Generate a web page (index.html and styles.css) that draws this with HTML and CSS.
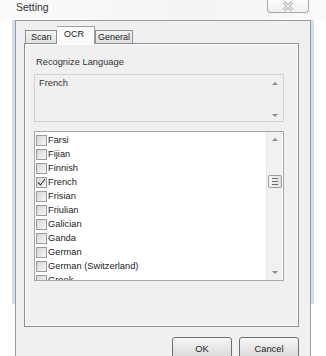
FILE: index.html
```html
<!DOCTYPE html>
<html lang="en">
<head>
    <meta charset="UTF-8">
    <title>Setting</title>
    <link rel="stylesheet" href="styles.css">
</head>
<body>
    <div class="titlebar">
        <span class="title">Setting</span>
        <div class="close-btn">
            <svg width="12" height="10" viewBox="0 0 12 10">
                <path d="M2 1 L10 9 M10 1 L2 9" stroke="#9a9a9a" stroke-width="3" fill="none"/>
                <path d="M2 1 L10 9 M10 1 L2 9" stroke="#fafafa" stroke-width="1.2" fill="none"/>
            </svg>
        </div>
    </div>

    <div class="frame">
        <div class="client">
            <div class="tabs">
                <div class="tab tab-scan">Scan</div>
                <div class="tab tab-ocr active">OCR</div>
                <div class="tab tab-general">General</div>
            </div>

            <div class="panel">
                <div class="group-label">Recognize Language</div>

                <div class="textbox">
                    <div class="textbox-text">French</div>
                    <div class="mini-scroll">
                        <span class="arrow-up"></span>
                        <span class="arrow-down"></span>
                    </div>
                </div>

                <div class="listbox">
                    <div class="list-items">
                        <div class="row"><span class="check"></span>Farsi</div>
                        <div class="row"><span class="check"></span>Fijian</div>
                        <div class="row"><span class="check"></span>Finnish</div>
                        <div class="row"><span class="check checked">
                            <svg width="9" height="9" viewBox="0 0 9 9"><path d="M1 4.5 L3.5 7 L8 1" stroke="#3a3a3a" stroke-width="1.1" fill="none"/></svg>
                        </span>French</div>
                        <div class="row"><span class="check"></span>Frisian</div>
                        <div class="row"><span class="check"></span>Friulian</div>
                        <div class="row"><span class="check"></span>Galician</div>
                        <div class="row"><span class="check"></span>Ganda</div>
                        <div class="row"><span class="check"></span>German</div>
                        <div class="row"><span class="check"></span>German (Switzerland)</div>
                        <div class="row"><span class="check"></span>Greek</div>
                    </div>
                    <div class="scrollbar">
                        <span class="arrow-up"></span>
                        <div class="thumb">
                            <span></span><span></span><span></span>
                        </div>
                        <span class="arrow-down"></span>
                    </div>
                </div>
            </div>

            <div class="buttons">
                <button class="btn">OK</button>
                <button class="btn">Cancel</button>
            </div>
        </div>
    </div>
</body>
</html>
```

FILE: styles.css
```css
body {
    margin: 0;
    width: 326px;
    height: 356px;
    overflow: hidden;
    background-color: #fff;
    font-family: "Liberation Sans", Arial, sans-serif;
    font-size: 9.3px;
    color: #222;
}
.titlebar {
    height: 20px;
    display: flex;
    align-items: flex-start;
    background: linear-gradient(to right, #fbfbfb, #f4f4f4 60%, #fafafa);
}
.title {
    padding: 1px 0 0 16px;
    font-size: 10.5px;
    line-height: 13px;
    color: #333;
}
.close-btn {
    margin-left: auto;
    margin-right: 17px;
    width: 40px;
    height: 12px;
    border: 1px solid #a8a8a8;
    border-top: none;
    border-radius: 0 0 4px 4px;
    background: linear-gradient(#fdfdfd, #f0f0f0);
    display: flex;
    justify-content: center;
    align-items: center;
}
.frame {
    margin: 0 12px;
    padding: 0 3px;
    background: linear-gradient(to bottom, #cfe0f3 0, #cfe0f3 284px, #fff 284px);
}
.client {
    height: 340px;
    border: 1px solid #9a9a9a;
    border-bottom: none;
    background-color: #f0f0f0;
    padding: 5px 11px 0 8px;
}
.tabs {
    display: flex;
    align-items: flex-end;
    height: 17px;
    padding-left: 1px;
    position: relative;
    z-index: 1;
}
.tab {
    box-sizing: border-box;
    height: 13px;
    line-height: 12px;
    padding-left: 5px;
    border: 1px solid #8e8e8e;
    border-bottom: none;
    background: linear-gradient(#f4f4f4, #e2e2e2);
    font-size: 9px;
}
.tab-scan {
    width: 32px;
}
.tab-general {
    width: 38px;
    padding-left: 2px;
}
.tab.active {
    width: 38px;
    height: 18px;
    margin-bottom: -1px;
    padding-left: 7px;
    padding-top: 1px;
    background: #fbfbfb;
    border-color: #a0a0a0;
    border-left: none;
}
.panel {
    box-sizing: border-box;
    width: 275px;
    height: 284px;
    border: 1px solid #8e8e8e;
    box-shadow: inset 1px 1px 0 #fbfbfb, inset -1px -1px 0 #fbfbfb;
    padding: 12px 0 0 9px;
}
.group-label {
    margin-left: 2px;
    line-height: 12px;
    color: #333;
}
.textbox {
    box-sizing: border-box;
    margin-top: 6px;
    width: 250px;
    height: 48px;
    border: 1px solid #d2d2d2;
    display: flex;
}
.textbox-text {
    flex: 1;
    padding: 2px 4px;
    line-height: 12px;
    color: #333;
}
.mini-scroll {
    width: 16px;
    display: flex;
    flex-direction: column;
    justify-content: space-between;
    align-items: center;
    padding: 7px 0 4px;
}
.arrow-up {
    width: 0;
    height: 0;
    border-left: 3px solid transparent;
    border-right: 3px solid transparent;
    border-bottom: 3px solid #8a8a8a;
}
.arrow-down {
    width: 0;
    height: 0;
    border-left: 3px solid transparent;
    border-right: 3px solid transparent;
    border-top: 3px solid #8a8a8a;
}
.listbox {
    box-sizing: border-box;
    margin-top: 9px;
    width: 250px;
    height: 150px;
    border: 1px solid #a7a7a7;
    background-color: #fff;
    display: flex;
}
.list-items {
    flex: 1;
    overflow: hidden;
    padding: 1px 0 0 1px;
}
.row {
    height: 14px;
    display: flex;
    align-items: center;
    color: #222;
}
.check {
    box-sizing: border-box;
    width: 11px;
    height: 11px;
    margin-right: 1px;
    border: 1px solid #9a9a9a;
    background: linear-gradient(135deg, #d6d6d6, #f7f7f7);
    display: flex;
    align-items: center;
    justify-content: center;
}
.scrollbar {
    width: 15px;
    margin-right: 1px;
    background-color: #f1f1f1;
    border-left: 1px solid #e6e6e6;
    display: flex;
    flex-direction: column;
    align-items: center;
    padding: 6px 0 6px;
}
.scrollbar .arrow-down {
    margin-top: auto;
}
.thumb {
    box-sizing: border-box;
    margin-top: 34px;
    width: 14px;
    height: 13px;
    border: 1px solid #9c9c9c;
    border-radius: 2px;
    background: linear-gradient(to right, #f6f6f6, #e1e1e1);
    display: flex;
    flex-direction: column;
    justify-content: center;
    align-items: center;
    gap: 2px;
}
.thumb span {
    display: block;
    width: 6px;
    height: 1px;
    background-color: #6e6e6e;
}
.buttons {
    display: flex;
    justify-content: flex-end;
    gap: 7px;
    width: 275px;
    margin-top: 10px;
}
.btn {
    width: 60px;
    height: 23px;
    padding: 0;
    border: 1px solid #707070;
    border-radius: 3px;
    background: linear-gradient(#f6f6f6, #e6e6e6 50%, #d9d9d9);
    font-family: "Liberation Sans", Arial, sans-serif;
    font-size: 9.3px;
    color: #222;
}
```
